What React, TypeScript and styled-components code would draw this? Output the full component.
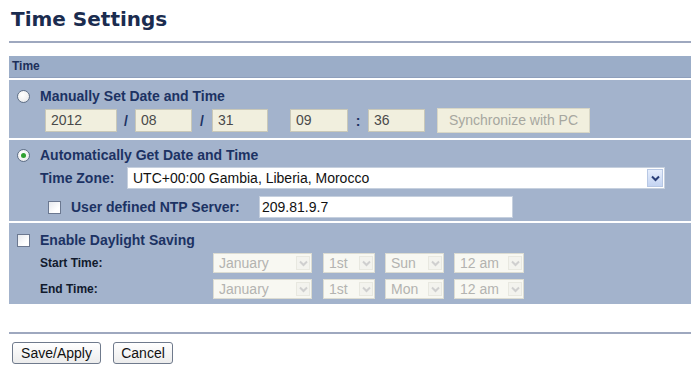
import { FC } from "react";
import styled, { createGlobalStyle } from "styled-components";

const GlobalStyle = createGlobalStyle`
  html, body {
    margin: 0;
    padding: 0;
    background: #ffffff;
    font-family: "Liberation Sans", Arial, sans-serif;
  }
`;

const Page = styled.div`
  width: 691px;
  height: 381px;
  padding-left: 9px;
  box-sizing: border-box;
  overflow: hidden;
`;

const Title = styled.h1`
  margin: 0;
  padding: 7px 0 0 2px;
  height: 33px;
  box-sizing: border-box;
  font-family: "DejaVu Sans", Verdana, sans-serif;
  font-weight: bold;
  font-size: 20px;
  line-height: 24px;
  color: #1b2c4f;
`;

const Rule = styled.div<{ $top: number }>`
  height: 2px;
  margin-top: ${(p) => p.$top}px;
  background: #9ea8bf;
`;

const Panel = styled.div`
  margin-top: 13px;
  display: flex;
  flex-direction: column;
  gap: 2px;
`;

const PanelHead = styled.div`
  height: 21px;
  padding-left: 3px;
  background: #9badc8;
  border-bottom: 1px solid #8e9fbc;
  font-size: 12px;
  font-weight: bold;
  line-height: 21px;
  color: #1d2f5a;
`;

const Section = styled.div<{ $pt: number; $pb: number }>`
  background: #a3b3cc;
  padding: ${(p) => p.$pt}px 0 ${(p) => p.$pb}px 0;
  display: flex;
  flex-direction: column;
`;

const Row = styled.div<{ $mt?: number; $pl?: number }>`
  display: flex;
  align-items: center;
  margin-top: ${(p) => p.$mt ?? 0}px;
  padding-left: ${(p) => p.$pl ?? 0}px;
`;

const Radio = styled.span<{ $checked?: boolean }>`
  width: 13px;
  height: 13px;
  margin: 0 10px 0 8px;
  border-radius: 50%;
  box-sizing: border-box;
  border: 1px solid #5f6f86;
  background: radial-gradient(circle at 40% 35%, #ffffff 0%, #f2f2f2 55%, #d8dde6 100%);
  display: flex;
  align-items: center;
  justify-content: center;

  &::after {
    content: "";
    display: ${(p) => (p.$checked ? "block" : "none")};
    width: 5px;
    height: 5px;
    border-radius: 50%;
    background: #2fa12f;
  }
`;

const Check = styled.span<{ $ml: number }>`
  width: 13px;
  height: 13px;
  margin: 0 10px 0 ${(p) => p.$ml}px;
  box-sizing: border-box;
  border: 1px solid #6b7890;
  background: linear-gradient(135deg, #e6e9ee 0%, #ffffff 70%);
  flex: none;
`;

const Heading = styled.span`
  font-size: 14px;
  font-weight: bold;
  line-height: 20px;
  color: #1c3263;
`;

const FieldLabel = styled.span<{ $w: number; $size?: number; $dark?: boolean }>`
  width: ${(p) => p.$w}px;
  flex: none;
  font-size: ${(p) => p.$size ?? 14}px;
  font-weight: bold;
  color: ${(p) => (p.$dark ? "#111a2c" : "#1c3263")};
`;

const DateInput = styled.div<{ $w: number }>`
  width: ${(p) => p.$w}px;
  height: 23px;
  box-sizing: border-box;
  padding-left: 5px;
  border: 1px solid #c9c8b8;
  background: #f1efde;
  font-size: 14px;
  line-height: 21px;
  color: #4a4a4a;
  flex: none;
`;

const Sep = styled.span<{ $w: number }>`
  width: ${(p) => p.$w}px;
  flex: none;
  text-align: center;
  font-size: 14px;
  font-weight: bold;
  color: #1c3263;
`;

const SyncButton = styled.div`
  margin-left: 12px;
  width: 153px;
  height: 25px;
  box-sizing: border-box;
  border: 1px solid #d9d7c6;
  background: #f1efde;
  font-size: 14px;
  line-height: 23px;
  text-align: center;
  color: #a7a7a0;
`;

const Select = styled.div<{ $w: number; $h: number; $disabled?: boolean }>`
  width: ${(p) => p.$w}px;
  height: ${(p) => p.$h}px;
  box-sizing: border-box;
  display: flex;
  align-items: center;
  padding: 0 1px 0 5px;
  border: 1px solid ${(p) => (p.$disabled ? "#dcdcd2" : "#c6d0de")};
  background: ${(p) => (p.$disabled ? "#f8f8f2" : "#ffffff")};
  font-size: 14px;
  color: ${(p) => (p.$disabled ? "#b3b3b0" : "#111111")};
  flex: none;
`;

const SelectText = styled.span`
  flex: 1;
  white-space: nowrap;
  overflow: hidden;
`;

const Arrow = styled.span<{ $disabled?: boolean }>`
  width: ${(p) => (p.$disabled ? 14 : 16)}px;
  height: ${(p) => (p.$disabled ? 14 : 18)}px;
  box-sizing: border-box;
  display: flex;
  align-items: center;
  justify-content: center;
  border: 1px solid ${(p) => (p.$disabled ? "#e8e8e0" : "#b8c8e4")};
  background: ${(p) =>
    p.$disabled ? "#f3f3ee" : "linear-gradient(#e6eefc, #c4d4f2)"};
`;

const TextInput = styled.div`
  width: 254px;
  height: 22px;
  box-sizing: border-box;
  padding-left: 2px;
  border: 1px solid #c6d0de;
  background: #ffffff;
  font-size: 14px;
  line-height: 20px;
  color: #111111;
`;

const Actions = styled.div`
  margin-top: 8px;
  padding-left: 3px;
  display: flex;
  gap: 12px;
`;

const Button = styled.button<{ $w: number }>`
  width: ${(p) => p.$w}px;
  height: 22px;
  padding: 0;
  border: 1px solid #6f7a8c;
  border-radius: 3px;
  background: linear-gradient(#ffffff, #ececec);
  font-family: "Liberation Sans", Arial, sans-serif;
  font-size: 14px;
  color: #111111;
`;

const Chevron: FC<{ disabled?: boolean }> = ({ disabled }) => (
  <svg width="9" height="7" viewBox="0 0 9 7">
    <path
      d="M1 1.5 L4.5 5 L8 1.5"
      fill="none"
      stroke={disabled ? "#cfcfcf" : "#2a3f77"}
      strokeWidth="2"
    />
  </svg>
);

type DropProps = { w: number; text: string };

const SmallSelect: FC<DropProps> = ({ w, text }) => (
  <Select $w={w} $h={20} $disabled>
    <SelectText>{text}</SelectText>
    <Arrow $disabled>
      <Chevron disabled />
    </Arrow>
  </Select>
);

const DstRow: FC<{ label: string; day: string; mt: number }> = ({ label, day, mt }) => (
  <Row $mt={mt} $pl={31}>
    <FieldLabel $w={173} $size={12} $dark>
      {label}
    </FieldLabel>
    <SmallSelect w={99} text="January" />
    <Spacer $w={11} />
    <SmallSelect w={52} text="1st" />
    <Spacer $w={10} />
    <SmallSelect w={59} text={day} />
    <Spacer $w={10} />
    <SmallSelect w={70} text="12 am" />
  </Row>
);

const Spacer = styled.span<{ $w: number }>`
  width: ${(p) => p.$w}px;
  flex: none;
`;

export default function App() {
  return (
    <>
      <GlobalStyle />
      <Page>
        <Title>Time Settings</Title>
        <Rule $top={8} />
        <Panel>
          <PanelHead>Time</PanelHead>

          <Section $pt={6} $pb={5}>
            <Row>
              <Radio />
              <Heading>Manually Set Date and Time</Heading>
            </Row>
            <Row $mt={2} $pl={36}>
              <DateInput $w={72}>2012</DateInput>
              <Sep $w={18}>/</Sep>
              <DateInput $w={57}>08</DateInput>
              <Sep $w={20}>/</Sep>
              <DateInput $w={56}>31</DateInput>
              <Spacer $w={22} />
              <DateInput $w={58}>09</DateInput>
              <Sep $w={20}>:</Sep>
              <DateInput $w={57}>36</DateInput>
              <SyncButton>Synchronize with PC</SyncButton>
            </Row>
          </Section>

          <Section $pt={5} $pb={3}>
            <Row>
              <Radio $checked />
              <Heading>Automatically Get Date and Time</Heading>
            </Row>
            <Row $mt={2} $pl={31}>
              <FieldLabel $w={87}>Time Zone:</FieldLabel>
              <Select $w={538} $h={22}>
                <SelectText>UTC+00:00 Gambia, Liberia, Morocco</SelectText>
                <Arrow>
                  <Chevron />
                </Arrow>
              </Select>
            </Row>
            <Row $mt={7}>
              <Check $ml={39} />
              <FieldLabel $w={188}>User defined NTP Server:</FieldLabel>
              <TextInput>209.81.9.7</TextInput>
            </Row>
          </Section>

          <Section $pt={7} $pb={5}>
            <Row>
              <Check $ml={8} />
              <Heading>Enable Daylight Saving</Heading>
            </Row>
            <DstRow label="Start Time:" day="Sun" mt={3} />
            <DstRow label="End Time:" day="Mon" mt={6} />
          </Section>
        </Panel>
        <Rule $top={28} />
        <Actions>
          <Button $w={89}>Save/Apply</Button>
          <Button $w={60}>Cancel</Button>
        </Actions>
      </Page>
    </>
  );
}
